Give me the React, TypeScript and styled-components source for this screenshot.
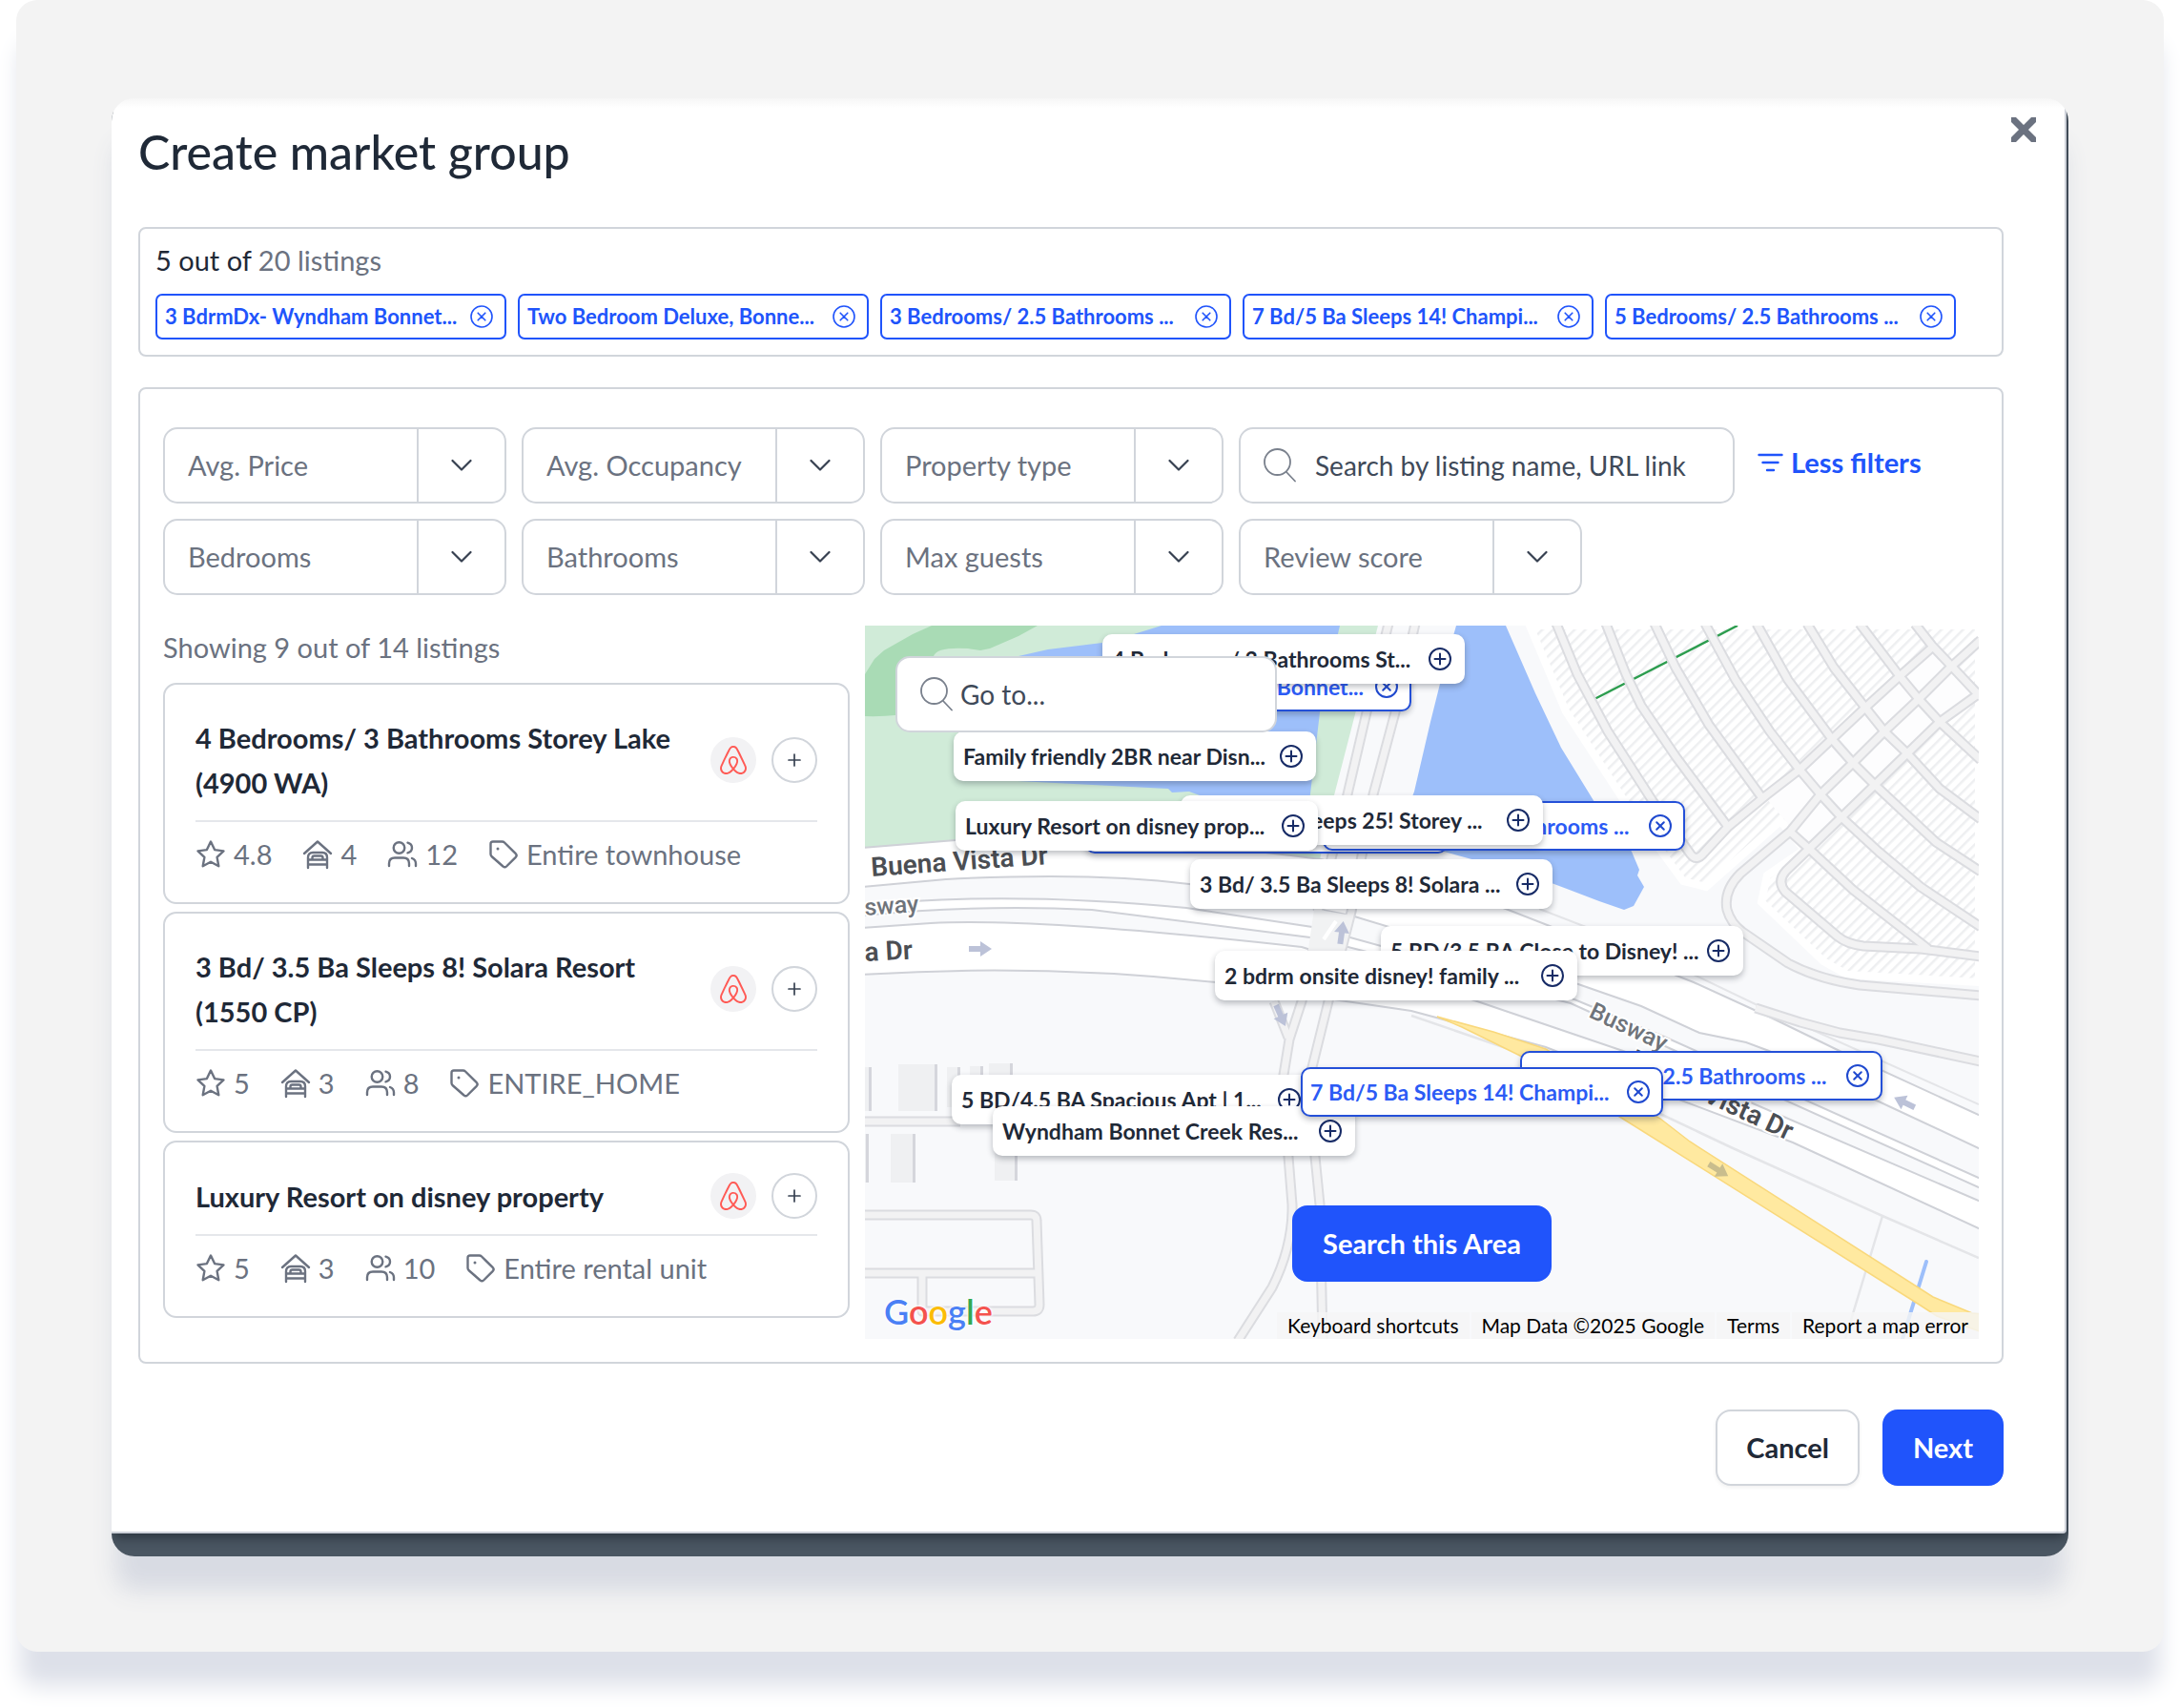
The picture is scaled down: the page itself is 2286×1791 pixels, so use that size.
import React from "react";
import styled, { createGlobalStyle, css } from "styled-components";
import { SiAirbnb } from "react-icons/si";

const color = {
  ink: "#1f2937",
  text: "#374151",
  muted: "#6b7280",
  line: "#d1d5db",
  blue: "#2054fb",
  navy: "#172b66",
};

const GlobalStyle = createGlobalStyle`
  *, *::before, *::after { box-sizing: border-box; }
  body { margin: 0; background: #fff; }
  body, button, input, select {
    font-family: Lato, "Liberation Sans", sans-serif;
  }
`;

const Page = styled.div`
  padding: 0 17px 59px;
`;

const Backdrop = styled.div`
  padding: 103px 100px 100px;
  border-radius: 22px;
  background: #f3f3f3;
  box-shadow: 0 40px 24px -4px #dde0e9;
`;

const Frame = styled.div`
  padding: 0 2px 24px 0;
  border-radius: 24px;
  overflow: hidden;
  background: linear-gradient(#f6f6f6 14px, #4a5662 14px);
`;

const FrameShadow = styled.div`
  border-radius: 24px;
  box-shadow: 0 40px 24px -4px #d8dbe3;
`;

const Modal = styled.section`
  border-right: 2px solid #cdd1d9;
  border-bottom: 2px solid #cdd1d9;
  border-bottom-right-radius: 4px;
  background: linear-gradient(#f6f6f6, #fff 10px);
  box-shadow: 0 6px 12px -2px rgba(20, 28, 36, 0.6);
`;

const Header = styled.header`
  display: flex;
  justify-content: space-between;
  align-items: flex-start;
  padding: 20px 30px 49px 28px;
`;

const Title = styled.h1`
  margin: 0;
  padding-top: 6px;
  font-size: 50px;
  line-height: 60px;
  font-weight: 500;
  color: ${color.ink};
`;

const CloseButton = styled.button`
  display: flex;
  padding: 0;
  border: 0;
  background: none;
  color: ${color.muted};
  cursor: pointer;
`;

const Body = styled.div`
  display: flex;
  flex-direction: column;
  gap: 32px;
  padding: 0 64px 0 28px;
`;

const panel = css`
  border: 2px solid ${color.line};
  border-radius: 8px;
`;

const SelectedPanel = styled.section`
  ${panel}
  padding: 13px 16px 16px;
`;

const Count = styled.p`
  margin: 0 0 15px;
  font-size: 29px;
  line-height: 40px;
  color: ${color.ink};
  span { color: ${color.muted}; }
`;

const ChipList = styled.ul`
  display: flex;
  flex-wrap: wrap;
  gap: 12px;
  margin: 0;
  padding: 0;
  list-style: none;
`;

const Chip = styled.li`
  flex: 0 1 368px;
  display: flex;
  align-items: center;
  justify-content: space-between;
  height: 48px;
  padding: 0 12px 0 8px;
  border: 2px solid ${color.blue};
  border-radius: 7px;
  font-size: 22px;
  line-height: 28px;
  font-weight: 700;
  white-space: nowrap;
  color: ${color.blue};
`;

const IconButton = styled.button`
  display: flex;
  padding: 0;
  border: 0;
  background: none;
  color: inherit;
  cursor: pointer;
`;

const BrowsePanel = styled.section`
  ${panel}
  display: flex;
  flex-direction: column;
  gap: 32px;
  padding: 40px 24px 24px;
`;

const Filters = styled.div`
  display: flex;
  flex-direction: column;
  gap: 16px;
`;

const FilterRow = styled.div`
  display: flex;
  align-items: center;
  gap: 16px;
`;

const SelectBox = styled.div`
  flex: 0 1 360px;
  min-width: 0;
  display: grid;
  grid-template-columns: 1fr 92px;
  height: 80px;
  border: 2px solid ${color.line};
  border-radius: 15px;
`;

const Select = styled.select`
  grid-area: 1 / 1 / 2 / 3;
  min-width: 0;
  padding: 0 92px 2px 24px;
  border: 0;
  border-radius: 13px;
  background: none;
  appearance: none;
  font-size: 29px;
  color: ${color.muted};
`;

const Arrow = styled.span`
  grid-area: 1 / 2 / 2 / 3;
  display: flex;
  align-items: center;
  justify-content: center;
  border-left: 2px solid ${color.line};
  pointer-events: none;
`;

const SearchBox = styled.label<{ $gap: number }>`
  flex: 0 1 520px;
  min-width: 0;
  display: flex;
  align-items: center;
  gap: ${(p) => p.$gap}px;
  height: 80px;
  padding: 0 24px;
  border: 2px solid ${color.line};
  border-radius: 15px;
  background: #fff;
  svg { flex: none; }
`;

const SearchInput = styled.input`
  flex: 1;
  min-width: 0;
  padding: 0;
  border: 0;
  outline: 0;
  background: none;
  font-size: 28px;
  color: ${color.text};
  &::placeholder { color: #3f4a59; opacity: 1; }
`;

const LessFilters = styled.button`
  display: flex;
  align-items: center;
  gap: 8px;
  padding: 0 0 6px 8px;
  border: 0;
  background: none;
  font-size: 29px;
  line-height: 40px;
  font-weight: 700;
  white-space: nowrap;
  color: ${color.blue};
  cursor: pointer;
`;

const Columns = styled.div`
  display: grid;
  grid-template-columns: minmax(0, 720fr) minmax(0, 1168fr);
  gap: 16px;
`;

const Results = styled.div`
  display: flex;
  flex-direction: column;
`;

const Showing = styled.p`
  margin: 0 0 14px;
  font-size: 29px;
  line-height: 46px;
  color: ${color.muted};
`;

const Cards = styled.div`
  display: flex;
  flex-direction: column;
  gap: 8px;
`;

const Card = styled.article`
  padding: 32px 32px 30px;
  border: 2px solid ${color.line};
  border-radius: 14px;
`;

const CardHead = styled.div`
  display: flex;
  align-items: center;
  gap: 16px;
  padding-bottom: 16px;
  border-bottom: 2px solid #e5e7eb;
`;

const CardTitle = styled.h2`
  flex: 1;
  margin: 0;
  font-size: 29px;
  line-height: 47px;
  font-weight: 700;
  color: ${color.ink};
`;

const Source = styled.span`
  flex: none;
  display: grid;
  place-items: center;
  width: 48px;
  height: 48px;
  border-radius: 50%;
  background: #f2f2f4;
  color: #ff5a55;
`;

const AddButton = styled.button`
  flex: none;
  display: grid;
  place-items: center;
  width: 48px;
  height: 48px;
  padding: 0;
  border: 2px solid ${color.line};
  border-radius: 50%;
  background: #fff;
  color: ${color.text};
  cursor: pointer;
`;

const Stats = styled.ul`
  display: flex;
  gap: 32px;
  margin: 14px 0 0;
  padding: 0;
  list-style: none;
  font-size: 29px;
  line-height: 40px;
  color: ${color.muted};
`;

const Stat = styled.li`
  display: flex;
  align-items: center;
  gap: 8px;
  white-space: nowrap;
`;

const MapArea = styled.div`
  position: relative;
  min-height: 748px;
  overflow: hidden;
  background: #f8f9fb;
`;

const MapDrawing = styled.svg`
  position: absolute;
  inset: 0;
  width: 100%;
  height: 100%;
`;

const MapSearch = styled.div`
  position: absolute;
  top: 32px;
  left: 32px;
  width: 400px;
`;

/* Pins are placed from the centre of the map, so they stay on their spot when it widens. */
const Pin = styled.button<{ $x: number; $y: number; $selected?: boolean }>`
  position: absolute;
  left: calc(50% + ${(p) => p.$x}px);
  top: ${(p) => p.$y}px;
  display: flex;
  align-items: center;
  justify-content: space-between;
  width: 380px;
  height: 52px;
  padding: 0 12px 0 8px;
  border: 2px solid ${(p) => (p.$selected ? "#2450d8" : "#fff")};
  border-radius: 10px;
  background: #fff;
  box-shadow: 0 3px 6px rgba(30, 35, 50, 0.3);
  font-size: 23px;
  line-height: 28px;
  font-weight: 700;
  white-space: nowrap;
  color: ${(p) => (p.$selected ? "#2c5bf5" : color.ink)};
  cursor: pointer;
  svg { color: ${(p) => (p.$selected ? "#1f49cf" : color.navy)}; }
`;

const Button = styled.button<{ $primary?: boolean }>`
  height: 80px;
  padding: 0 30px 2px;
  border: 2px solid ${(p) => (p.$primary ? color.blue : color.line)};
  border-radius: 16px;
  background: ${(p) => (p.$primary ? color.blue : "#fff")};
  box-shadow: ${(p) => (p.$primary ? "none" : "0 2px 4px rgba(0, 0, 0, 0.06)")};
  font-size: 29px;
  font-weight: 700;
  white-space: nowrap;
  color: ${(p) => (p.$primary ? "#fff" : color.ink)};
  cursor: pointer;
`;

const AreaAction = styled.div`
  position: absolute;
  right: 0;
  bottom: 60px;
  left: 0;
  display: flex;
  justify-content: center;
  pointer-events: none;
  button { pointer-events: auto; }
`;

const GoogleLink = styled.a`
  position: absolute;
  left: 20px;
  bottom: 7px;
  font-size: 36px;
  line-height: 44px;
  font-weight: 600;
  text-decoration: none;
  text-shadow: 0 0 2px #fff, 0 0 3px #fff, 0 0 4px #fff;
`;

const Letter = styled.span<{ $tone: string }>`
  color: ${(p) => p.$tone};
`;

const Attribution = styled.div`
  position: absolute;
  right: 0;
  bottom: 0;
  display: flex;
  gap: 2px;
  font-size: 21px;
  line-height: 28px;
  white-space: nowrap;
`;

const attributionItem = css`
  padding: 0 11px;
  background: rgba(245, 245, 245, 0.82);
  color: #000;
`;
const AttributionButton = styled.button`
  ${attributionItem}
  border: 0;
  font-size: inherit;
  line-height: inherit;
  cursor: pointer;
`;
const AttributionText = styled.span`${attributionItem}`;
const AttributionLink = styled.a`
  ${attributionItem}
  text-decoration: none;
`;

const Footer = styled.footer`
  display: flex;
  justify-content: flex-end;
  gap: 24px;
  padding: 48px 64px 48px 28px;
`;

const MapLabel = styled.text<{ $minor?: boolean }>`
  font-family: Roboto, sans-serif;
  font-size: ${(p) => (p.$minor ? 25 : 28)}px;
  font-weight: ${(p) => (p.$minor ? 500 : 600)};
  fill: ${(p) => (p.$minor ? "#6f747b" : "#4b4e53")};
  stroke: #fff;
  stroke-width: 4px;
  paint-order: stroke;
`;

function CircleIcon({ kind, width = 2 }: { kind: "plus" | "x"; width?: number }) {
  return (
    <svg width="24" height="24" viewBox="0 0 24 24" fill="none" stroke="currentColor" strokeWidth={width} strokeLinecap="round">
      <circle cx="12" cy="12" r="11" />
      {kind === "plus" ? <path d="M12 6.5v11M6.5 12h11" /> : <path d="m8.2 8.2 7.6 7.6m0-7.6-7.6 7.6" />}
    </svg>
  );
}

const SearchIcon = () => (
  <svg width="34" height="36" viewBox="0 0 34 36" fill="none" stroke="#7a818d" strokeWidth="1.8" strokeLinecap="round">
    <circle cx="14.5" cy="14.5" r="13.5" />
    <path d="m24 25 9 9.500" />
  </svg>
);

const CloseIcon = () => (
  <svg width="26" height="26" viewBox="0 0 24 24" stroke="currentColor" strokeWidth="6.500">
    <path d="M-2-2 26 26M26-2-2 26" />
  </svg>
);

const Chevron = () => (
  <svg width="22" height="14" viewBox="0 0 22 14" fill="none" stroke="#374151" strokeWidth="2.200" strokeLinecap="round" strokeLinejoin="round">
    <path d="m1.500 2 9.500 9.500L20.500 2" />
  </svg>
);

const FilterIcon = () => (
  <svg width="27" height="22" viewBox="0 0 27 22" stroke="currentColor" strokeWidth="2.400" strokeLinecap="round">
    <path d="M1.500 3h24M5.500 11h16M10 19h7" />
  </svg>
);

const PlusIcon = () => (
  <svg width="14" height="14" viewBox="0 0 14 14" stroke="currentColor" strokeWidth="1.700" strokeLinecap="round">
    <path d="M7 1v12M1 7h12" />
  </svg>
);

const statIcon = { width: 32, height: 32, viewBox: "0 0 32 32", fill: "none", stroke: "currentColor", strokeWidth: 2.4, strokeLinecap: "round", strokeLinejoin: "round" } as const;

const StarIcon = () => (
  <svg {...statIcon}>
    <path d="m16 2.500 4.100 8.600 9.400 1.300-6.900 6.500 1.700 9.400L16 23.800l-8.300 4.500 1.700-9.400-6.900-6.500 9.400-1.300z" />
  </svg>
);
const BedHouseIcon = () => (
  <svg {...statIcon}>
    <path d="M2 15 16 2.500 30 15" />
    <path d="M6 30V19q0-5 5-5h10q5 0 5 5v11M6 26.500h20M6 21.500h20M10.500 21v-1.500q0-2 2-2h7q2 0 2 2V21" />
  </svg>
);
const GuestsIcon = () => (
  <svg {...statIcon}>
    <circle cx="12.500" cy="9" r="5.800" />
    <path d="M2 28v-2.500q0-6 6-6h9q6 0 6 6V28M21.500 3.600q4.500 1.200 4.500 5.400t-4.500 5.400M26 20q4 1.500 4 5.500V28" />
  </svg>
);
const TagIcon = () => (
  <svg {...statIcon}>
    <path d="M2.500 5q0-2.500 2.500-2.500h9.500q1.500 0 2.500 1l11.800 11.700q1.700 1.800 0 3.600l-9.700 9.700q-1.800 1.700-3.600 0L3.500 18q-1-1-1-2.500z" />
    <circle cx="10" cy="10" r="1.500" fill="currentColor" stroke="none" />
  </svg>
);

const selected = [
  "3 BdrmDx- Wyndham Bonnet...",
  "Two Bedroom Deluxe, Bonne...",
  "3 Bedrooms/ 2.5 Bathrooms ...",
  "7 Bd/5 Ba Sleeps 14! Champi...",
  "5 Bedrooms/ 2.5 Bathrooms ...",
];

const listings = [
  { title: "4 Bedrooms/ 3 Bathrooms Storey Lake (4900 WA)", score: "4.8", rooms: 4, guests: 12, type: "Entire townhouse" },
  { title: "3 Bd/ 3.5 Ba Sleeps 8! Solara Resort (1550 CP)", score: "5", rooms: 3, guests: 8, type: "ENTIRE_HOME" },
  { title: "Luxury Resort on disney property", score: "5", rooms: 3, guests: 10, type: "Entire rental unit" },
];

const pins = [
  { x: -391, y: 38, label: selected[0], selected: true },
  { x: -335, y: 9, label: "4 Bedrooms/ 3 Bathrooms St..." },
  { x: -491, y: 111, label: "Family friendly 2BR near Disn..." },
  { x: -353, y: 187, label: selected[1], selected: true },
  { x: -104, y: 184, label: selected[2], selected: true },
  { x: -253, y: 178, label: "9 Bd/6 Ba Sleeps 25! Storey ..." },
  { x: -489, y: 184, label: "Luxury Resort on disney prop..." },
  { x: -243, y: 245, label: "3 Bd/ 3.5 Ba Sleeps 8! Solara ..." },
  { x: -43, y: 315, label: "5 BD/3.5 BA Close to Disney! ..." },
  { x: -217, y: 341, label: "2 bdrm onsite disney! family ..." },
  { x: 103, y: 446, label: selected[4], selected: true },
  { x: -493, y: 471, label: "5 BD/4.5 BA Spacious Apt | 1..." },
  { x: -450, y: 504, label: "Wyndham Bonnet Creek Res..." },
  { x: -127, y: 463, label: selected[3], selected: true },
];

const streets = [
  "M725-2 747 51 779 111 826 184 866 240Q872 248 880 238L905 211 945 178 980 151 1014 119 1049 86 1085 53 1119 23",
  "M777-2 798 51 814 84 850 137 905 211",
  "M828-2 850 44 885 104 941 181",
  "M881-2 913 57 949 111 980 151 1002 177 1024 201 1063 237 1107 274 1170 316",
  "M935-2 968 57 1014 119 1036 144 1059 167 1123 227 1170 258",
  "M988-2 1016 44 1049 86 1069 111 1093 134 1127 171 1170 203",
  "M1043-2 1085 53 1105 77 1127 101 1170 141",
  "M1101-2 1119 21 1138 41 1170 75",
  "M1170 15 1138 44 1105 77 1069 111 1036 144 1002 177 970 216 918 260Q900 278 904 298 908 312 920 321L968 354Q1000 371 1043 377L1170 388",
  "M1170 70 1127 101 1093 134 1059 167 1024 201 990 234 966 257Q956 268 965 279L1020 326Q1030 334 1047 336L1107 339 1170 347",
  "M970 216 990 234 1036 277 1115 339",
  "M549-2 526 91 506 177 475 300",
  "M577-2 556 91 533 177 510 300 486 394 467 471 472 557 477 607 480 750",
  "M470 340 458 394 445 434 439 471 444 557 448 607Q449 650 427 694L391 750",
  "M429 394 444 432",
  "M934 401 981 416 1022 427 1063 434 1170 457",
  "M-2 520H100",
  "M-2 618H174Q180 618 180 624L183 712Q183 719 176 719H60V679M-2 679H180",
];

const buildings = [
  [-4, 463, 8, 46], [35, 460, 38, 49], [86, 463, 11, 42], [110, 462, 11, 42],
  [130, 459, 22, 48], [-4, 533, 5, 51], [27, 533, 23, 51], [136, 540, 21, 42],
];

const buenaVistaNorth =
  "M-2 233 95 225Q250 216 478 245L600 272 672 297 869 374 950 411 1022 446 1170 514V549L1063 499 948 446 924 437 875 427 814 399 748 376 510 304 340 271Q238 258 85 266L-2 274Z";
const busway =
  "M-2 295 50 289Q180 281 337 296L469 316 744 392 838 431 1170 580V590L850 446 740 396 467 327 238 298Q120 292-2 304Z";
const buenaVistaSouth =
  "M-2 317 69 312Q180 306 458 337L642 394 795 446 924 498 1170 604V633L973 542 859 499 714 442 573 404 368 374Q180 354-2 366Z";

const DirectionArrow = ({ x, y, turn, fill = "#bcc2d8" }: { x: number; y: number; turn: number; fill?: string }) => (
  <path transform={`translate(${x} ${y}) rotate(${turn})`} d="M-12-3H0V-8L12 0 0 8V3H-12Z" fill={fill} />
);

function MapBackground() {
  return (
    <MapDrawing viewBox="0 0 1168 748" preserveAspectRatio="xMidYMid slice" aria-hidden="true">
      <defs>
        <pattern id="lots" width="8" height="8" patternUnits="userSpaceOnUse" patternTransform="rotate(45)">
          <rect width="8" height="8" fill="#fff" />
          <rect width="2.500" height="8" fill="#eeeff1" />
        </pattern>
      </defs>
      <path d="M0 0H538L492 178 476 250 0 236Z" fill="#d0ebd8" />
      <path d="M0 51 10 35 20 26 50 9 70 0H181L161 11 131 24 121 26 108 24Q75 22 72 32L60 90Q30 96 0 95Z" fill="#a9dbb5" />
      <path d="M311 0 282 9 249 18 192 25 161 32 130 60 130 140 160 163 318 171 322 175 340 174 351 178 466 185 477 91 498 0Z" fill="#9dbffa" />
      <path d="M620 0 603 61 593 101 576 174 568 195 600 235 640 246 720 270 736 276 770 289 796 298 806 294 817 274 810 262 812 256 804 237 765 185 730 128 703 71 672 0Z" fill="#9dbffa" />

      <path d="M697 0 735 90 795 182 858 268 882 274 960 205 985 235 946 262 940 290 1005 352 1030 366 1168 374V0Z" fill="url(#lots)" stroke="#fff" strokeWidth="8" />
      <path d="M945 181 1119 23 1168 72 990 234Z" fill="#fdfdfe" />
      <path d="M765 77 915 0" stroke="#2d9d4f" strokeWidth="2.500" />

      <g stroke="#cfd1d7" strokeWidth="2">
        <path d={buenaVistaNorth} fill="#fff" />
        <path d={busway} fill="#fff" />
        <path d={buenaVistaSouth} fill="#fff" />
      </g>
      <path d="M573 409 675 444 834 512 908 547 1067 619 1168 663M1067 619 1028 748" fill="none" stroke="#e4e5e8" strokeWidth="2.500" />
      <path d="M707 297 800 333 940 400 1168 502" fill="none" stroke="#e4e5e8" strokeWidth="2" />

      <g fill="none" stroke="#dbdce0" strokeWidth="11" strokeLinejoin="round">
        {streets.map((d) => <path key={d} d={d} />)}
      </g>
      <g fill="none" stroke="#f2f2f3" strokeWidth="7" strokeLinejoin="round">
        {streets.map((d) => <path key={d} d={d} />)}
      </g>
      <path d="M471 297 510 304 500 346 464 346Z" fill="#f1f2f3" />
      <path d="M481 329 494 310" stroke="#fff" strokeWidth="4" />

      {buildings.map(([x, y, w, h]) => (
        <g key={`${x}-${y}`}>
          <rect x={x} y={y} width={w} height={h} fill="#eff0f2" />
          <rect x={x + w} y={y} width="3" height={h} fill="#d5d6dc" />
        </g>
      ))}

      <path d="M1113 667 1088 748" stroke="#9dbffa" strokeWidth="4" strokeLinecap="round" />
      <path d="M600 410 659 426 714 444 834 517 865 541 1120 704 1161 721 1172 722V741L1124 724 1104 711 793 516 687 451 626 421Z" fill="#ffe9a0" stroke="#f9d87c" strokeWidth="1.500" />

      <DirectionArrow x={121} y={339} turn={0} />
      <DirectionArrow x={500} y={322} turn={-82} />
      <DirectionArrow x={436} y={409} turn={66} />
      <DirectionArrow x={1090} y={500} turn={206} />
      <DirectionArrow x={895} y={571} turn={32} fill="#c9bd8d" />

      <MapLabel transform="translate(7 263) rotate(-4)">Buena Vista Dr</MapLabel>
      <MapLabel $minor transform="translate(0 304) rotate(-4)">sway</MapLabel>
      <MapLabel transform="translate(0 352) rotate(-3)">a Dr</MapLabel>
      <MapLabel $minor transform="translate(758 410) rotate(25)">Busway</MapLabel>
      <MapLabel textAnchor="end" transform="translate(968 540) rotate(25)">Buena Vista Dr</MapLabel>
    </MapDrawing>
  );
}

function FilterSelect({ label }: { label: string }) {
  return (
    <SelectBox>
      <Select aria-label={label} defaultValue="">
        <option value="">{label}</option>
      </Select>
      <Arrow><Chevron /></Arrow>
    </SelectBox>
  );
}

const googleLetters: [string, string][] = [
  ["G", "#4a80f5"], ["o", "#f4524d"], ["o", "#fbbc05"], ["g", "#4a80f5"], ["l", "#34a853"], ["e", "#f4524d"],
];

export default function App() {
  return (
    <>
      <GlobalStyle />
      <Page>
        <Backdrop>
          <FrameShadow>
            <Frame>
              <Modal role="dialog" aria-labelledby="modal-title">
                <Header>
                  <Title id="modal-title">Create market group</Title>
                  <CloseButton aria-label="Close"><CloseIcon /></CloseButton>
                </Header>
                <Body>
                  <SelectedPanel>
                    <Count>5 out of <span>20 listings</span></Count>
                    <ChipList>
                      {selected.map((name) => (
                        <Chip key={name}>
                          {name}
                          <IconButton aria-label={`Remove ${name}`}><CircleIcon kind="x" width={1.6} /></IconButton>
                        </Chip>
                      ))}
                    </ChipList>
                  </SelectedPanel>
                  <BrowsePanel>
                    <Filters>
                      <FilterRow>
                        <FilterSelect label="Avg. Price" />
                        <FilterSelect label="Avg. Occupancy" />
                        <FilterSelect label="Property type" />
                        <SearchBox $gap={20}>
                          <SearchIcon />
                          <SearchInput aria-label="Search listings" placeholder="Search by listing name, URL link" />
                        </SearchBox>
                        <LessFilters><FilterIcon />Less filters</LessFilters>
                      </FilterRow>
                      <FilterRow>
                        <FilterSelect label="Bedrooms" />
                        <FilterSelect label="Bathrooms" />
                        <FilterSelect label="Max guests" />
                        <FilterSelect label="Review score" />
                      </FilterRow>
                    </Filters>
                    <Columns>
                      <Results>
                        <Showing>Showing 9 out of 14 listings</Showing>
                        <Cards>
                          {listings.map((item) => (
                            <Card key={item.title}>
                              <CardHead>
                                <CardTitle>{item.title}</CardTitle>
                                <Source><SiAirbnb size={30} title="Airbnb" /></Source>
                                <AddButton aria-label={`Add ${item.title}`}><PlusIcon /></AddButton>
                              </CardHead>
                              <Stats>
                                <Stat><StarIcon />{item.score}</Stat>
                                <Stat><BedHouseIcon />{item.rooms}</Stat>
                                <Stat><GuestsIcon />{item.guests}</Stat>
                                <Stat><TagIcon />{item.type}</Stat>
                              </Stats>
                            </Card>
                          ))}
                        </Cards>
                      </Results>
                      <MapArea>
                        <MapBackground />
                        {pins.map((pin) => (
                          <Pin key={pin.label} $x={pin.x} $y={pin.y} $selected={pin.selected}>
                            {pin.label}
                            <CircleIcon kind={pin.selected ? "x" : "plus"} />
                          </Pin>
                        ))}
                        <MapSearch>
                          <SearchBox $gap={8}>
                            <SearchIcon />
                            <SearchInput aria-label="Go to place" placeholder="Go to..." />
                          </SearchBox>
                        </MapSearch>
                        <AreaAction><Button $primary>Search this Area</Button></AreaAction>
                        <GoogleLink href="#google" aria-label="Google">
                          {googleLetters.map(([letter, tone], i) => <Letter key={i} $tone={tone}>{letter}</Letter>)}
                        </GoogleLink>
                        <Attribution>
                          <AttributionButton>Keyboard shortcuts</AttributionButton>
                          <AttributionText>Map Data ©2025 Google</AttributionText>
                          <AttributionLink href="#terms">Terms</AttributionLink>
                          <AttributionLink href="#report">Report a map error</AttributionLink>
                        </Attribution>
                      </MapArea>
                    </Columns>
                  </BrowsePanel>
                </Body>
                <Footer>
                  <Button>Cancel</Button>
                  <Button $primary>Next</Button>
                </Footer>
              </Modal>
            </Frame>
          </FrameShadow>
        </Backdrop>
      </Page>
    </>
  );
}
